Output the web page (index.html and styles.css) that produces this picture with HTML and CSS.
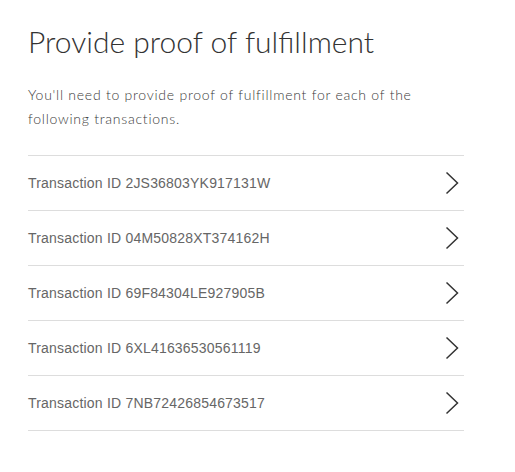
FILE: index.html
```html
<!DOCTYPE html>
<html>
<head>
<meta charset="utf-8">
<link rel="stylesheet" href="styles.css">
</head>
<body>
<main class="page">
  <h1 class="title">Provide proof of fulfillment</h1>
  <p class="intro">You'll need to provide proof of fulfillment for each of the following transactions.</p>
  <ul class="list">
    <li class="row"><span class="label">Transaction ID 2JS36803YK917131W</span><svg class="chev" viewBox="0 0 14 24" width="14" height="24"><path d="M1.5 1.5 L12.5 12 L1.5 22.5" fill="none" stroke="#333" stroke-width="1.5"/></svg></li>
    <li class="row"><span class="label">Transaction ID 04M50828XT374162H</span><svg class="chev" viewBox="0 0 14 24" width="14" height="24"><path d="M1.5 1.5 L12.5 12 L1.5 22.5" fill="none" stroke="#333" stroke-width="1.5"/></svg></li>
    <li class="row"><span class="label">Transaction ID 69F84304LE927905B</span><svg class="chev" viewBox="0 0 14 24" width="14" height="24"><path d="M1.5 1.5 L12.5 12 L1.5 22.5" fill="none" stroke="#333" stroke-width="1.5"/></svg></li>
    <li class="row"><span class="label">Transaction ID 6XL41636530561119</span><svg class="chev" viewBox="0 0 14 24" width="14" height="24"><path d="M1.5 1.5 L12.5 12 L1.5 22.5" fill="none" stroke="#333" stroke-width="1.5"/></svg></li>
    <li class="row"><span class="label">Transaction ID 7NB72426854673517</span><svg class="chev" viewBox="0 0 14 24" width="14" height="24"><path d="M1.5 1.5 L12.5 12 L1.5 22.5" fill="none" stroke="#333" stroke-width="1.5"/></svg></li>
  </ul>
</main>
</body>
</html>
```
FILE: styles.css
```css
html, body { margin: 0; padding: 0; background: #fff; }
.page { width: 436px; padding: 21px 0 0 28px; }
.title {
  margin: 0;
  font-family: Lato, "Open Sans", sans-serif;
  font-weight: 300;
  font-size: 30px;
  line-height: 40px;
  color: #333;
}
.intro {
  margin: 22px 0 0;
  font-family: Lato, sans-serif;
  font-weight: 300;
  font-size: 14px;
  line-height: 24px;
  color: #3a3a3a;
  letter-spacing: 0.75px;
}
.list { list-style: none; margin: 24px 0 0; padding: 0; border-top: 1px solid #ddd; }
.row {
  height: 54px;
  border-bottom: 1px solid #ddd;
  display: flex;
  align-items: center;
  justify-content: space-between;
}
.label {
  font-family: "Liberation Sans", Arial, sans-serif;
  font-size: 14px;
  letter-spacing: 0.2px;
  color: #666;
}
.chev { margin-right: 5px; display: block; }
```
